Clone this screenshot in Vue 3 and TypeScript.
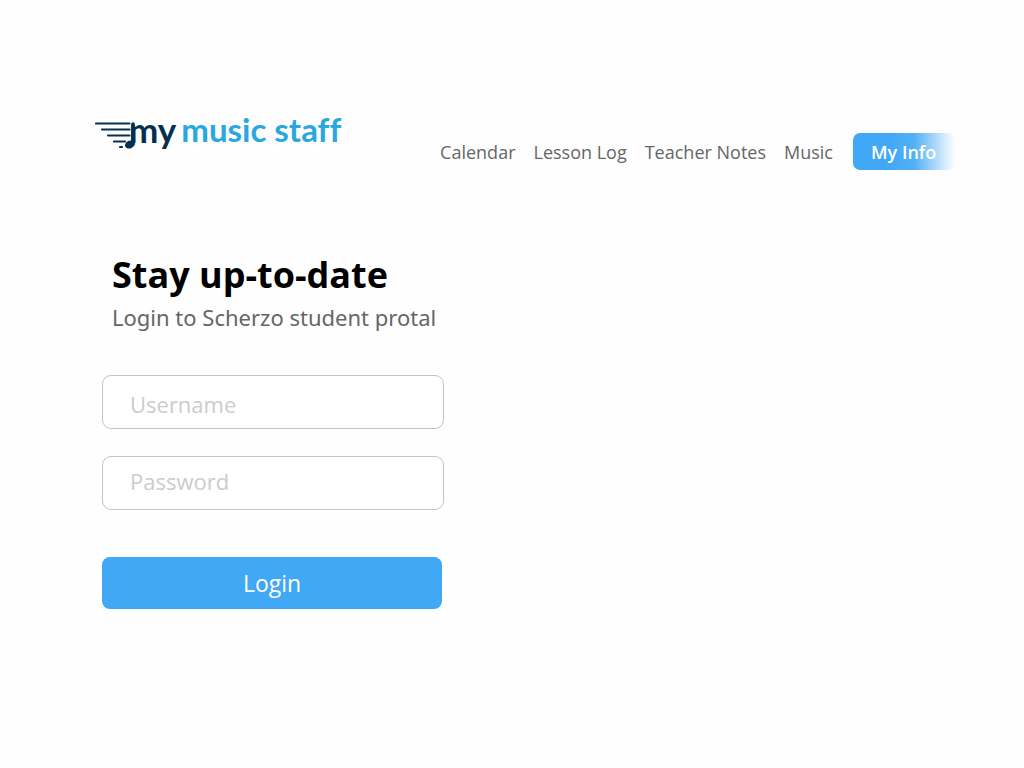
<script setup lang="ts">
import { ref } from 'vue'

const links: string[] = ['Calendar', 'Lesson Log', 'Teacher Notes', 'Music']
const username = ref('')
const password = ref('')
</script>

<template>
  <div class="page">
    <header class="header">
      <a class="logo" href="#" aria-label="my music staff">
        <svg class="mark" width="40" height="36" viewBox="0 0 40 36" aria-hidden="true">
          <g stroke="#06304f" stroke-width="2.2" stroke-linecap="round" fill="none">
            <path d="M1 10.5H34.5M7 16.5H34.5M13 22.5H34.5M19 28.5H30M25 34H27" />
            <path d="M38 11V31" stroke-width="3.6" />
          </g>
          <ellipse cx="34.8" cy="31.5" rx="5" ry="3.8" transform="rotate(-25 34.8 31.5)" fill="#06304f" />
        </svg>
        <span class="dark">my</span>
        <span>music staff</span>
      </a>
      <nav class="nav">
        <a v-for="link in links" :key="link" href="#">{{ link }}</a>
        <button class="info" type="button">My Info</button>
      </nav>
    </header>

    <main class="main">
      <h1>Stay up-to-date</h1>
      <p>Login to Scherzo student protal</p>
      <form class="form" @submit.prevent>
        <input v-model="username" class="user" type="text" aria-label="Username" placeholder="Username" />
        <input v-model="password" type="password" aria-label="Password" placeholder="Password" />
        <button class="login" type="submit">Login</button>
      </form>
    </main>
  </div>
</template>

<style>
body {
  margin: 0;
  background: #fefefe;
}
</style>

<style scoped>
.page {
  font-family: "Open Sans", "Noto Sans", sans-serif;
  color: #666;
}
.header {
  display: flex;
  justify-content: space-between;
  align-items: flex-start;
  padding: 113px 69px 0 95px;
}
.logo {
  display: flex;
  align-items: flex-start;
  color: #29a8e0;
  text-decoration: none;
  font: 700 33px/32px Lato, sans-serif;
  font-variant-ligatures: none;
  white-space: nowrap;
}
.mark {
  flex: none;
  margin-right: -6px;
}
.dark {
  color: #06304f;
  font-size: 35px;
  margin-right: 5px;
}
.nav {
  display: flex;
  align-items: center;
  gap: 18px;
  padding-top: 20px;
  white-space: nowrap;
}
.nav a {
  color: #666;
  text-decoration: none;
  font-size: 18px;
  line-height: 36px;
}
.info {
  width: 102px;
  height: 37px;
  margin-left: 2px;
  padding: 0 18px;
  border: 0;
  border-radius: 7px;
  background: linear-gradient(90deg, #41a8f5 35%, #52b0f6 60%, #fefefe 100%);
  color: #fff;
  font: 600 18px/36px "Open Sans", sans-serif;
  text-align: left;
}
.main {
  max-width: 342px;
  padding: 80px 24px 0 102px;
}
h1 {
  margin: 0 0 0 10px;
  color: #000;
  font: 700 36px/50px "Open Sans", sans-serif;
  white-space: nowrap;
}
p {
  margin: 0 0 0 10px;
  font: 400 22px/34px "Noto Sans", sans-serif;
  white-space: nowrap;
}
.form {
  display: flex;
  flex-direction: column;
  margin-top: 41px;
}
input {
  box-sizing: border-box;
  width: 100%;
  height: 54px;
  margin: 0 0 27px;
  padding: 0 27px 4px;
  border: 1px solid #c4c4c4;
  border-radius: 9px;
  background: #fff;
  color: #666;
  font: 400 22px/30px "Open Sans", sans-serif;
}
.user {
  padding: 4px 27px 0;
}
input::placeholder {
  color: #ccc;
  opacity: 1;
}
.login {
  height: 52px;
  margin: 20px 2px 0 0;
  border: 0;
  border-radius: 8px;
  background: #41a8f5;
  color: #fff;
  font: 400 23px/30px "Open Sans", sans-serif;
}
</style>
